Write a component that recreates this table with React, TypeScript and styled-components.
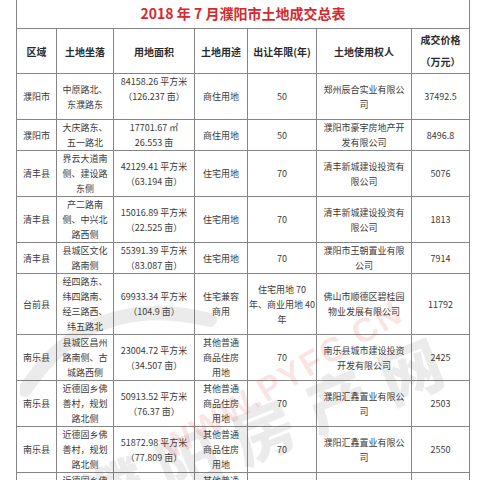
import React from "react";
import styled, { createGlobalStyle } from "styled-components";

const Global = createGlobalStyle`
  html, body { margin: 0; padding: 0; background: #fff; }
  body { font-family: "Noto Sans CJK SC", "Noto Sans", sans-serif; }
`;

const Page = styled.div`
  position: relative;
  width: 480px;
  height: 480px;
  overflow: hidden;
  background: #fff;
  padding-left: 16px;
  box-sizing: border-box;
`;

const Table = styled.table`
  border-collapse: collapse;
  table-layout: fixed;
  width: 454px;
`;

const TitleCell = styled.td`
  height: 25px;
  padding: 0 0 3px 0;
  border: 1px solid #858585;
  border-top: none;
  text-align: center;
  vertical-align: middle;
  font-size: 14px;
  font-weight: 700;
  line-height: 18px;
  color: #d8282c;
`;

const Row = styled.tr<{ $h: number }>`
  height: ${(p) => p.$h}px;
`;

const Th = styled.td<{ $lh?: number }>`
  padding: 0;
  border: 1px solid #858585;
  text-align: center;
  vertical-align: middle;
  white-space: nowrap;
  font-size: 10px;
  font-weight: 700;
  line-height: ${(p) => p.$lh ?? 15}px;
  color: #2a2a2a;
`;

const Td = styled.td`
  padding: 0;
  border: 1px solid #858585;
  text-align: center;
  vertical-align: middle;
  white-space: nowrap;
  font-size: 9px;
  line-height: 15px;
  color: #3a3a3a;
`;

const Watermark = styled.div`
  position: absolute;
  inset: 0;
  pointer-events: none;
  overflow: hidden;
`;

const WmUrl = styled.div`
  position: absolute;
  left: 282px;
  top: 380px;
  transform: translate(-50%, -50%) rotate(-31deg);
  font-family: "Liberation Sans", Arial, sans-serif;
  font-weight: 700;
  font-size: 34px;
  letter-spacing: 2px;
  white-space: nowrap;
  color: rgba(214, 40, 46, 0.13);
`;

const WmName = styled.div`
  position: absolute;
  left: 270px;
  top: 425px;
  transform: translate(-50%, -50%) rotate(-22deg);
  font-weight: 900;
  font-size: 62px;
  letter-spacing: 18px;
  white-space: nowrap;
  color: rgba(90, 90, 90, 0.12);
`;

const WmLogo = styled.svg`
  position: absolute;
  left: 20px;
  top: 280px;
`;

const cols = [40, 57, 81, 53, 69, 95, 58];

type R = { h: number; c: string[][] };

const rows: R[] = [
  { h: 45, c: [["濮阳市"], ["中原路北、", "东濮路东"], ["84158.26 平方米", "（126.237 亩）", ""], ["商住用地"], ["50"], ["郑州辰合实业有限公", "司"], ["37492.5"]] },
  { h: 30, c: [["濮阳市"], ["大庆路东、", "五一路北"], ["17701.67 ㎡", "26.553 亩"], ["商住用地"], ["50"], ["濮阳市豪宇房地产开", "发有限公司"], ["8496.8"]] },
  { h: 45, c: [["清丰县"], ["界云大道南", "侧、建设路", "东侧"], ["42129.41 平方米", "（63.194 亩）"], ["住宅用地"], ["70"], ["清丰新城建设投资有", "限公司"], ["5076"]] },
  { h: 44, c: [["清丰县"], ["产二路南", "侧、中兴北", "路西侧"], ["15016.89 平方米", "（22.525 亩）"], ["住宅用地"], ["70"], ["清丰新城建设投资有", "限公司"], ["1813"]] },
  { h: 31, c: [["清丰县"], ["县城区文化", "路南侧"], ["55391.39 平方米", "（83.087 亩）"], ["住宅用地"], ["70"], ["濮阳市王朝置业有限", "公司"], ["7914"]] },
  { h: 59, c: [["台前县"], ["经四路东、", "纬四路南、", "经三路西、", "纬五路北"], ["69933.34 平方米", "（104.9 亩）"], ["住宅兼容", "商用"], ["住宅用地 70", "年、商业用地 40", "年"], ["佛山市顺德区碧桂园", "物业发展有限公司"], ["11792"]] },
  { h: 45, c: [["南乐县"], ["县城区昌州", "路南侧、古", "城路西侧"], ["23004.72 平方米", "（34.507 亩）"], ["其他普通", "商品住房", "用地"], ["70"], ["南乐县城市建设投资", "开发有限公司"], ["2425"]] },
  { h: 46, c: [["南乐县"], ["近德固乡佛", "善村，规划", "路北侧"], ["50913.52 平方米", "（76.37 亩）"], ["其他普通", "商品住房", "用地"], ["70"], ["濮阳汇鑫置业有限公", "司"], ["2503"]] },
  { h: 46, c: [["南乐县"], ["近德固乡佛", "善村，规划", "路北侧"], ["51872.98 平方米", "（77.809 亩）"], ["其他普通", "商品住房", "用地"], ["70"], ["濮阳汇鑫置业有限公", "司"], ["2550"]] },
  { h: 46, c: [["南乐县"], ["近德固乡佛", "善村，规划", "路北侧"], ["61752.43 平方米", "（92.628 亩）"], ["其他普通", "商品住房", "用地"], ["70"], ["濮阳汇鑫置业有限公", "司"], ["3066"]] },
];

const Lines = ({ lines }: { lines: string[] }) => (
  <>
    {lines.map((l, i) => (
      <React.Fragment key={i}>
        {i > 0 && <br />}
        {l === "" ? "\u00a0" : l}
      </React.Fragment>
    ))}
  </>
);

export default function App() {
  return (
    <Page>
      <Global />
      <Table>
        <colgroup>
          {cols.map((w, i) => (
            <col key={i} style={{ width: w }} />
          ))}
        </colgroup>
        <tbody>
          <tr>
            <TitleCell colSpan={7}>2018 年 7 月濮阳市土地成交总表</TitleCell>
          </tr>
          <Row $h={45}>
            <Th>区域</Th>
            <Th>土地坐落</Th>
            <Th>用地面积</Th>
            <Th>土地用途</Th>
            <Th>出让年限(年)</Th>
            <Th>土地使用权人</Th>
            <Th $lh={22}>
              成交价格
              <br />（万元）
            </Th>
          </Row>
          {rows.map((r, i) => (
            <Row key={i} $h={r.h}>
              {r.c.map((cell, j) => (
                <Td key={j}>
                  <Lines lines={cell} />
                </Td>
              ))}
            </Row>
          ))}
        </tbody>
      </Table>
      <Watermark>
        <WmLogo width="200" height="120" viewBox="0 0 200 120">
          <path d="M5 110 Q 70 10 190 40" fill="none" stroke="rgba(90,90,90,0.12)" strokeWidth="14" strokeLinecap="round" />
        </WmLogo>
        <WmName>濮阳房产网</WmName>
        <WmUrl>WWW.PYFC.CN</WmUrl>
      </Watermark>
    </Page>
  );
}
